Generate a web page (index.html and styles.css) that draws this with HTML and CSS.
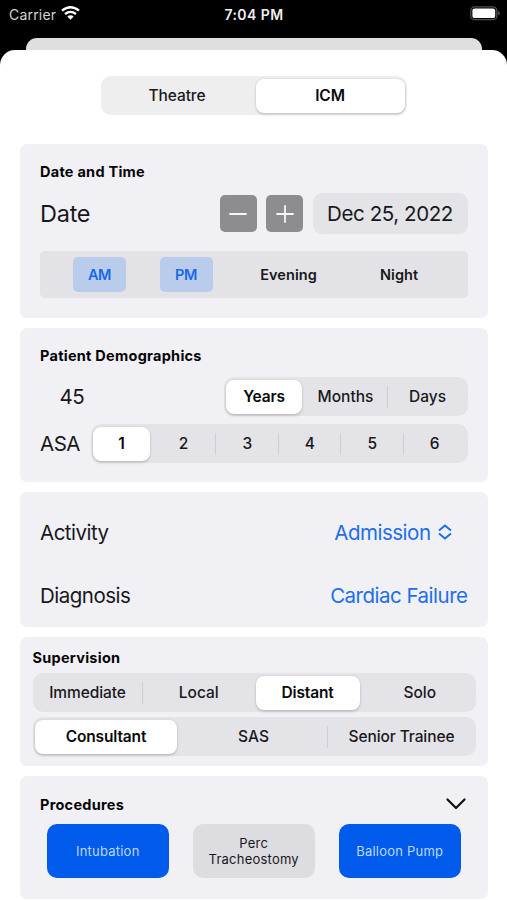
FILE: index.html
```html
<!DOCTYPE html>
<html lang="en">
<head>
<meta charset="utf-8">
<meta name="viewport" content="width=device-width, initial-scale=1">
<title>Case entry</title>
<link rel="stylesheet" href="styles.css">
</head>
<body>
<header class="status">
  <div class="carrier"><span>Carrier</span>
    <svg width="19" height="14" viewBox="0 0 19 14"><path d="M1 4.7Q9.5-2.2 18 4.7M4 8Q9.5 3.7 15 8" fill="none" stroke="#fff" stroke-width="2.3"/><path d="M6.3 10.4Q9.5 7.9 12.7 10.4L9.5 13.7Z" fill="#fff"/></svg>
  </div>
  <div class="time">7:04 PM</div>
  <svg class="battery" width="31" height="15" viewBox="0 0 31 15"><rect x=".8" y=".8" width="26" height="12.9" rx="3.8" fill="none" stroke="#505050" stroke-width="1.3"/><rect x="2.4" y="2.4" width="22.8" height="9.7" rx="2.2" fill="#fff"/><path d="M28.4 5Q31 7.2 28.4 9.5Z" fill="#777"/></svg>
</header>
<div class="back-sheet"></div>
<main class="sheet">
  <div class="segmented mode"><span class="seg">Theatre</span><span class="seg selected">ICM</span></div>

  <section class="card when">
    <h2>Date and Time</h2>
    <div class="row date-row">
      <span class="label date-label">Date</span>
      <button class="step" aria-label="Previous day"><svg width="18" height="18" viewBox="0 0 18 18"><path d="M1 9H17"/></svg></button>
      <button class="step" aria-label="Next day"><svg width="18" height="18" viewBox="0 0 18 18"><path d="M1 9H17M9 1V17"/></svg></button>
      <span class="date">Dec 25, 2022</span>
    </div>
    <div class="periods"><span class="period on">AM</span><span class="period on">PM</span><span class="period">Evening</span><span class="period">Night</span></div>
  </section>

  <section class="card patient">
    <h2>Patient Demographics</h2>
    <div class="row age-row">
      <span class="label age">45</span>
      <div class="segmented units"><span class="seg selected">Years</span><span class="seg">Months</span><span class="seg divided">Days</span></div>
    </div>
    <div class="row asa-row">
      <span class="label asa-label">ASA</span>
      <div class="segmented asa"><span class="seg selected">1</span><span class="seg">2</span><span class="seg divided">3</span><span class="seg divided">4</span><span class="seg divided">5</span><span class="seg divided">6</span></div>
    </div>
  </section>

  <section class="card details">
    <div class="row activity"><span class="label">Activity</span><span class="link menu-link">Admission <svg width="14" height="16" viewBox="0 0 14 16"><path d="M1 6.4L7 1.4L13 6.4M1 9.6L7 14.6L13 9.6"/></svg></span></div>
    <div class="row diagnosis"><span class="label">Diagnosis</span><span class="link">Cardiac Failure</span></div>
  </section>

  <section class="card supervision">
    <h2>Supervision</h2>
    <div class="segmented level"><span class="seg">Immediate</span><span class="seg divided">Local</span><span class="seg selected">Distant</span><span class="seg">Solo</span></div>
    <div class="segmented grade"><span class="seg selected">Consultant</span><span class="seg">SAS</span><span class="seg divided">Senior Trainee</span></div>
  </section>

  <section class="card procedures">
    <div class="row"><h2>Procedures</h2><svg class="chevron" width="20" height="12" viewBox="0 0 20 12"><path d="M1.5 1.5L10 10L18.5 1.5"/></svg></div>
    <div class="options"><span class="option on">Intubation</span><span class="option">Perc<br>Tracheostomy</span><span class="option on">Balloon Pump</span></div>
  </section>
</main>
</body>
</html>
```
FILE: styles.css
```css
* { box-sizing: border-box; }
body { margin: 0; height: 900px; overflow: hidden; background: #000; color: #18181b; font-family: Inter, "Liberation Sans", sans-serif; }
svg { display: block; flex: none; }
.status { display: grid; grid-template-columns: 1fr auto 1fr; align-items: center; height: 38px; padding: 0 6px 10px 9px; color: #eee; font-size: 14px; }
.carrier { display: flex; align-items: center; gap: 5px; letter-spacing: .2px; color: #d5d5d5; }
.carrier svg { margin-top: -2px; }
.time { margin-left: -2px; font-weight: 600; font-size: 14px; letter-spacing: .45px; }
.battery { justify-self: end; margin-top: -1px; }
.back-sheet { height: 12px; margin: 0 25px 0 26px; background: #dfdfdf; border-radius: 11px 11px 0 0; }
.sheet { height: 850px; padding: 26px 19.5px 0 20px; background: #fff; border-radius: 15px 15px 0 0; }
.segmented { display: grid; height: 39px; padding: 2.5px; background: #e4e3e8; border-radius: 10px; font-size: 15.5px; font-weight: 500; }
.seg { position: relative; display: flex; align-items: center; justify-content: center; white-space: nowrap; }
.seg.selected { background: #fff; border-radius: 8px; color: #09090b; font-weight: 600; letter-spacing: -.15px; box-shadow: 0 0 2px #0002, 0 2px 3px #0002; }
.seg.divided::before { content: ""; position: absolute; left: 0; top: 6px; bottom: 6px; width: 1px; background: #cfced4; }
.mode { width: 306px; margin: 0 auto 29px 81px; grid-template-columns: 1fr 149px; background: #eee; }
.mode .seg:first-child { padding-right: 5px; letter-spacing: -.1px; }
.card { margin-bottom: 10px; background: #f1f0f5; border-radius: 7px; }
h2 { margin: 0; font-size: 14.5px; line-height: 18px; font-weight: 700; letter-spacing: .26px; color: #050505; }
.row { display: flex; align-items: center; }
.label, .link { font-size: 20.5px; line-height: 26px; letter-spacing: -.5px; }
.when { height: 174px; padding: 19px 20px 0; }
.date-row { height: 41px; margin-top: 12px; }
.date-label { flex: 1; font-size: 23.5px; letter-spacing: -.25px; }
.step { display: grid; place-items: center; width: 37px; height: 37px; margin-right: 9.5px; padding: 0; border: 0; border-radius: 5px; background: #8d8c91; }
.step svg { fill: none; stroke: #f6f6f7; stroke-width: 1.8; stroke-linecap: round; }
.date { display: grid; place-items: center; width: 155px; height: 41px; border-radius: 9px; background: #e4e3e8; font-size: 20.5px; letter-spacing: -.4px; white-space: nowrap; }
.periods { display: flex; align-items: center; height: 47px; margin-top: 17px; padding-left: 33px; border-radius: 5px; background: #e3e2e7; font-size: 14.5px; font-weight: 600; }
.period { display: grid; place-items: center; height: 35px; letter-spacing: .05px; }
.period.on { width: 53px; margin-right: 33.5px; border-radius: 5px; background: #b9cceb; color: #1769e8; letter-spacing: -.4px; }
.period:nth-child(3) { width: 57px; margin: 0 63px 0 14px; }
.patient { height: 154px; padding: 19px 20px 0; }
.age-row { height: 39px; margin-top: 12px; justify-content: space-between; }
.age { margin-left: 19.5px; }
.units { width: 244px; grid-template-columns: 76px 85px 1fr; }
.units .seg:nth-child(2) { padding-left: 2px; }
.units .seg:nth-child(3) { padding-left: 3px; }
.asa-row { height: 39px; margin-top: 8px; justify-content: space-between; }
.asa { width: 377px; grid-template-columns: 57px 65px repeat(4, 1fr); }
.asa .seg:not(.selected) { padding-left: 2px; }
.details { height: 135px; padding: 27px 20px 0; }
.details .row { height: 28px; justify-content: space-between; }
.link { color: #1b6fe9; }
.menu-link { display: flex; align-items: center; gap: 7px; margin-right: 16px; }
.menu-link svg { margin-top: -2px; fill: none; stroke: #1b6fe9; stroke-width: 1.9; }
.diagnosis { margin-top: 35px; }
.supervision { height: 129px; padding: 12px 12px 0 12.5px; }
.level { margin-top: 6px; grid-template-columns: 107px 1fr 104px 1fr; }
.level .seg:first-child { padding-right: 2px; letter-spacing: -.1px; }
.level .seg:last-child { padding-left: 7px; }
.grade { margin-top: 5px; grid-template-columns: 142px 1fr 146px; }
.grade .seg:nth-child(2) { padding-left: 3px; }
.grade .seg:last-child { padding-left: 3px; letter-spacing: -.1px; }
.procedures { height: 123px; margin: 0; padding: 19px 20px 0; }
.procedures h2 { padding-top: 1px; }
.procedures .row { height: 18px; justify-content: space-between; padding-right: 2px; }
.chevron { fill: none; stroke: #111; stroke-width: 2.2; stroke-linecap: round; stroke-linejoin: round; }
.options { display: flex; gap: 24.5px; margin: 11px 0 0 7px; }
.option { display: flex; align-items: center; justify-content: center; width: 121.5px; height: 54px; border-radius: 10px; background: #dddce1; font-size: 13px; line-height: 16px; letter-spacing: .22px; text-align: center; }
.option.on { background: #005bed; color: #bcd8ff; }
```
